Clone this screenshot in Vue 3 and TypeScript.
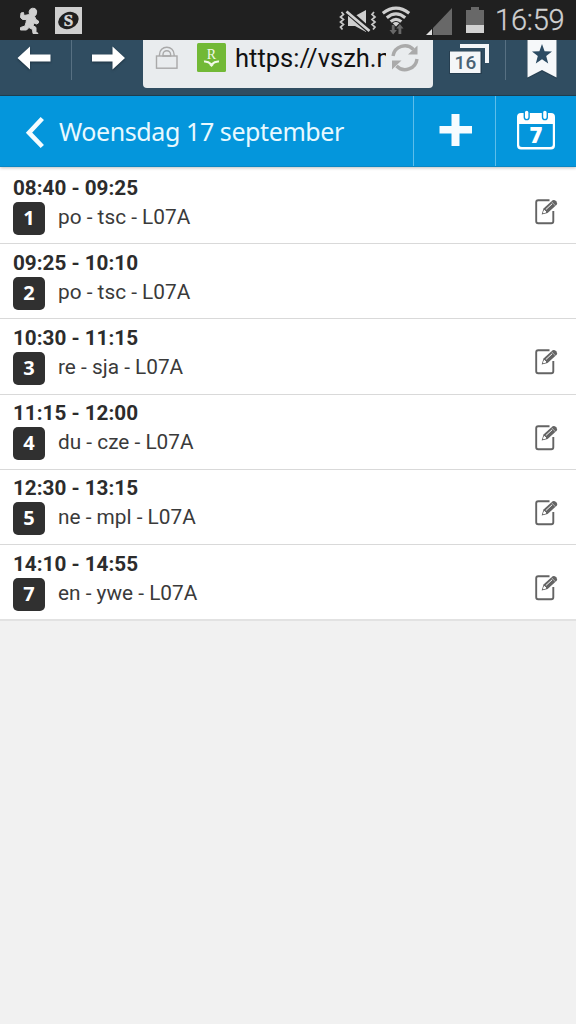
<script setup lang="ts">
interface Lesson {
  time: string
  hour: number
  label: string
  editable: boolean
}

const lessons: Lesson[] = [
  { time: '08:40 - 09:25', hour: 1, label: 'po - tsc - L07A', editable: true },
  { time: '09:25 - 10:10', hour: 2, label: 'po - tsc - L07A', editable: false },
  { time: '10:30 - 11:15', hour: 3, label: 're - sja - L07A', editable: true },
  { time: '11:15 - 12:00', hour: 4, label: 'du - cze - L07A', editable: true },
  { time: '12:30 - 13:15', hour: 5, label: 'ne - mpl - L07A', editable: true },
  { time: '14:10 - 14:55', hour: 7, label: 'en - ywe - L07A', editable: true },
]
</script>

<template>
  <main class="screen">
    <div class="status">
      <svg class="runner" width="22" height="28" viewBox="0 0 22 28">
        <path
          d="M12 2.500Q14 .5 17 1.500Q19.500 3.500 18.500 6.500Q18 8.500 16.500 9.200L18 12.500L20.500 14Q21.300 16.500 18.500 17L16 16L15 18.500L18 20.500V24.500L20 26.500H15L14.500 22.500L11 20.500L8.500 23H2.500V20.500L7 19L8 15.500L8.500 12.500H4.500L2.500 10.500L3 6L5.500 5.500L6 8.500L11.500 7.500Q10.500 4.500 12 2.500Z"
          fill="#cfcfcf" stroke="#cfcfcf" stroke-linejoin="round" />
      </svg>
      <svg class="s-badge" width="27" height="27" viewBox="0 0 27 27">
        <rect width="27" height="27" fill="#cfcfcf" />
        <ellipse cx="13.500" cy="13.500" rx="10.600" ry="8.200" fill="#202020" transform="rotate(-24 13.500 13.500)" />
        <text x="13.500" y="19.200" text-anchor="middle" class="s-letter">S</text>
      </svg>
      <span class="spacer"></span>
      <svg class="mute" width="38" height="24" viewBox="0 0 38 24">
        <path d="M9 7H16L27 1V23L16 17H9Z" fill="#cfcfcf" />
        <path d="M7 1L31 22" stroke="#202020" stroke-width="6" />
        <path d="M7.500 2.500L30.500 22" stroke="#d2d2d2" stroke-width="2.800" />
        <path d="M2.500 3l2 2.500l-3 2.500l3 2.500l-3 2.500l3 2.500l-3 2.500l2 2.500M35 3l-2 2.500l3 2.500l-3 2.500l3 2.500l-3 2.500l3 2.500l-2 2.500" fill="none" stroke="#c8c8c8" stroke-width="1.700" />
      </svg>
      <svg class="wifi" width="30" height="30" viewBox="0 0 30 30">
        <g fill="none" stroke="#cfcfcf" stroke-width="3.200">
          <path d="M1.800 7.200Q15 -3 28.200 7.200" />
          <path d="M5.800 11.700Q15 4 24.200 11.700" />
          <path d="M9.700 15.600Q15 11 20.300 15.600" />
        </g>
        <path d="M11.700 17.200Q15 15 18.300 17.200L15 20.500Z" fill="#d2d2d2" />
        <path d="M10.800 19h2.800v5h2.300l-3.700 4.500l-3.700 -4.500h2.300zM17.500 28v-5.500h-2.200l3.600 -4.500l3.600 4.500h-2.200v5.500z" fill="#686868" />
      </svg>
      <svg class="signal" width="26" height="28" viewBox="0 0 26 28">
        <path d="M26 0V27H7V20Z" fill="#686868" />
        <path d="M6 21V27H0Z" fill="#e0e0e0" />
      </svg>
      <svg class="battery" width="18" height="26" viewBox="0 0 18 26">
        <path d="M5 0H13V3H18V26H0V3H5Z" fill="#686868" />
        <path d="M0 18H18V26H0Z" fill="#d2d2d2" />
      </svg>
      <span class="clock">16:59</span>
    </div>

    <div class="browser">
      <div class="nav back">
        <svg width="36" height="26" viewBox="0 0 36 26"><path d="M0.500 12L13 0.500V8.500H33.500V15.500H13V23.500Z" fill="#fff" /></svg>
      </div>
      <div class="nav forward">
        <svg width="36" height="26" viewBox="0 0 36 26"><path d="M34 12L21.500 0.500V8.500H1V15.500H21.500V23.500Z" fill="#fff" /></svg>
      </div>
      <div class="address">
        <svg class="lock" width="24" height="24" viewBox="0 0 24 24">
          <g fill="none" stroke="#a9a9a9" stroke-width="1.400">
            <rect x="1.500" y="10" width="20.500" height="12.200" />
            <path d="M4.500 10V8.500a7.300 7.300 0 0 1 14.600 0V10M8 10V8.500a3.800 3.800 0 0 1 7.600 0V10Z" />
          </g>
        </svg>
        <svg class="favicon" width="29" height="29" viewBox="0 0 29 29">
          <rect width="29" height="29" rx="1.500" fill="#72b936" />
          <text x="14.500" y="16" text-anchor="middle" class="fav-letter">R</text>
          <path d="M7 18.500Q11 18 14.500 21.500Q18 18 22 18.500" fill="none" stroke="#f3fae9" stroke-width="2" />
          <path d="M12 21.500H17L14.500 24Z" fill="#f3fae9" />
        </svg>
        <span class="url">https://vszh.m</span>
        <svg class="reload" width="30" height="30" viewBox="0 0 30 30">
          <g fill="none" stroke="#aaa" stroke-width="3.400">
            <path d="M3 13A12 12 0 0 1 23.500 6.500" />
            <path d="M27 16A12 12 0 0 1 6.500 23" />
          </g>
          <path d="M27.500 2.500V11.500H18ZM2 26.500V17.500H11.500Z" fill="#aaa" />
        </svg>
      </div>
      <div class="tabs">
        <svg width="42" height="32" viewBox="0 0 42 32">
          <path d="M12 2H41V21H37V6H12Z" fill="#f4f6f8" />
          <rect x="1" y="9" width="33" height="23" fill="#203545" opacity=".6" />
          <rect x="2" y="9.500" width="30.500" height="21.500" fill="#f4f6f8" />
          <text x="17.400" y="27" text-anchor="middle" class="tab-count">16</text>
        </svg>
      </div>
      <div class="bookmark">
        <svg width="32" height="40" viewBox="0 0 32 40">
          <path d="M1 0H31V39L16 31.500L1 39Z" fill="#203545" opacity=".5" />
          <path d="M1.500 0H30.500V37.500L16 30L1.500 37.500Z" fill="#f6f8fa" />
          <path d="M16 4L18.600 11.200L26 11.500L20.200 16.100L22.200 23.500L16 19.300L9.800 23.500L11.800 16.100L6 11.500L13.400 11.200Z" fill="#2c4b63" />
        </svg>
      </div>
    </div>

    <header class="header">
      <svg class="chevron" width="20" height="34" viewBox="0 0 20 34"><path d="M18.300 2.500L5 16.700L18.300 30.500" fill="none" stroke="#f4fcff" stroke-width="4.600" /></svg>
      <h1>Woensdag 17 september</h1>
      <div class="action">
        <svg width="34" height="34" viewBox="0 0 34 34"><path d="M13.500 1H21.500V13H34V20.500H21.500V33H13.500V20.500H1.500V13H13.500Z" fill="#f6fcff" /></svg>
      </div>
      <div class="action">
        <svg width="40" height="40" viewBox="0 0 40 40">
          <path d="M5 3H35Q39 3 39 7V35.500Q39 39.500 35 39.500H5Q1 39.500 1 35.500V7Q1 3 5 3ZM3.200 14V34.500Q3.200 37 6 37H34Q36.800 37 36.800 34.500V14Z" fill="#fff" fill-rule="evenodd" />
          <g fill="#fff" stroke="#0496dc" stroke-width="1.400">
            <rect x="8.300" y="0" width="4.800" height="9.600" rx="2.400" />
            <rect x="26.500" y="0" width="4.800" height="9.600" rx="2.400" />
          </g>
          <text x="20" y="33.400" text-anchor="middle" class="cal-day">7</text>
        </svg>
      </div>
    </header>

    <ul class="list">
      <li v-for="lesson in lessons" :key="lesson.hour" class="row">
        <div class="info">
          <div class="time">{{ lesson.time }}</div>
          <div class="detail">
            <span class="hour">{{ lesson.hour }}</span>
            <span class="label">{{ lesson.label }}</span>
          </div>
        </div>
        <svg v-if="lesson.editable" class="edit" width="26" height="28" viewBox="0 0 26 28">
          <path d="M15.500 2.200H4.200Q2.200 2.200 2.200 4.200V23.300Q2.200 25.300 4.200 25.300H17.300Q19.300 25.300 19.300 23.300V13" fill="none" stroke="#646464" stroke-width="1.900" />
          <path d="M7.700 16.600L9.500 10.600L18.600 2.300Q20.300 1.300 22.200 3.200Q24 5.200 22.700 6.700L13.600 15Z" fill="#646464" />
          <path d="M11.800 11.600L18.200 5.700M9.400 14.800L10.300 12.300L12 14Z" fill="#fff" stroke="#fff" stroke-width="1" />
          <path d="M17.500 3.600L21.500 7.900" stroke="#c4c4c4" stroke-width=".8" />
        </svg>
      </li>
    </ul>
  </main>
</template>

<style>
body {
  background: #f1f1f1;
}
</style>

<style scoped>
.screen {
  width: 576px;
  height: 1024px;
  overflow: hidden;
  background: #f1f1f1;
  font-family: Roboto, sans-serif;
}
svg {
  display: block;
  flex: none;
}
.status {
  display: flex;
  align-items: flex-start;
  box-sizing: border-box;
  height: 40px;
  padding: 0 12px 0 18px;
  background: #202020;
}
.runner { margin-top: 7px; }
.s-badge { margin: 7px 0 0 15px; }
.s-letter {
  font: bold 17px "Liberation Serif", serif;
  fill: #d8d8d8;
  stroke: #d8d8d8;
  stroke-width: .5;
}
.spacer { flex: 1; }
.mute { margin: 9px 0 0; }
.wifi { margin: 6px 0 0 4px; }
.signal { margin: 8px 0 0 15px; }
.battery { margin: 7px 0 0 14px; }
.clock {
  width: 69px;
  margin-left: 11px;
  color: #d0d0d0;
  font-size: 29px;
  font-weight: 300;
  line-height: 41px;
  white-space: nowrap;
  letter-spacing: -.2px;
  -webkit-text-stroke: .3px #d0d0d0;
}
.browser {
  display: flex;
  box-sizing: border-box;
  height: 56px;
  border-bottom: 1px solid #1f4053;
  background: #304d61;
}
.nav {
  box-sizing: border-box;
  height: 40px;
}
.nav svg { filter: drop-shadow(0 1px 1px #1b303f); }
.back {
  width: 72px;
  padding: 6px 0 0 17px;
  border-right: 1px solid #577082;
}
.forward {
  width: 71px;
  padding: 6px 0 0 19px;
}
.address {
  display: flex;
  align-items: flex-start;
  box-sizing: border-box;
  width: 290px;
  height: 48px;
  padding-left: 12px;
  border-radius: 0 0 4px 4px;
  background: #e9ecee;
}
.lock { margin-top: 6px; }
.favicon { margin: 3px 0 0 18px; }
.fav-letter {
  font: 14px "Liberation Serif", serif;
  fill: #f3fae9;
}
.url {
  width: 151px;
  margin-left: 9px;
  overflow: hidden;
  color: #111;
  font-size: 25.5px;
  line-height: 37px;
  white-space: nowrap;
}
.reload { margin: 3px 0 0 4px; }
.tabs {
  box-sizing: border-box;
  width: 73px;
  height: 40px;
  padding: 2px 0 0 15px;
  border-right: 1px solid #577082;
}
.tab-count {
  font: 500 19px Roboto, sans-serif;
  fill: #4a6274;
}
.bookmark { padding-left: 20px; }
.header {
  display: flex;
  align-items: flex-start;
  box-sizing: border-box;
  height: 71px;
  padding-left: 24px;
  border-bottom: 1px solid #0a87c4;
  background: #0496dc;
  box-shadow: 0 1px 3px rgba(0, 0, 0, .25);
  position: relative;
}
.chevron { margin-top: 20px; }
h1 {
  flex: 1;
  margin: 0 0 0 15px;
  color: #e8f9ff;
  font: 400 25px/71px "Noto Sans", sans-serif;
  letter-spacing: -.41px;
  white-space: nowrap;
}
.action {
  display: flex;
  justify-content: center;
  box-sizing: border-box;
  width: 82px;
  height: 70px;
  padding-top: 17px;
  border-left: 1px solid #5dbdea;
}
.action:last-child {
  width: 81px;
  padding-top: 14px;
}
.cal-day {
  font: 800 22px "Open Sans", sans-serif;
  fill: #fff;
}
.list {
  margin: 0;
  padding: 2px 0 0;
  border-bottom: 2px solid #e2e2e2;
  background: #fff;
  list-style: none;
}
.row {
  display: flex;
  justify-content: space-between;
  box-sizing: border-box;
  height: 75.200px;
  padding: 5.700px 16px 0 13px;
  border-bottom: 1px solid #d9d9d9;
}
.row:last-child {
  height: 74px;
  border-bottom: 0;
}
.time {
  color: #2c2c2c;
  font-size: 20.7px;
  font-weight: 700;
  line-height: 27px;
  white-space: nowrap;
}
.detail {
  display: flex;
  align-items: flex-start;
}
.hour {
  width: 32px;
  height: 33px;
  border-radius: 5px;
  background: #303030;
  color: #fff;
  font: 700 20px/31px "Open Sans", sans-serif;
  text-align: center;
}
.label {
  margin-left: 13px;
  color: #3a3a3a;
  font-size: 20.8px;
  line-height: 30px;
  white-space: nowrap;
}
.edit { margin: 23.300px 0 0; }
</style>
